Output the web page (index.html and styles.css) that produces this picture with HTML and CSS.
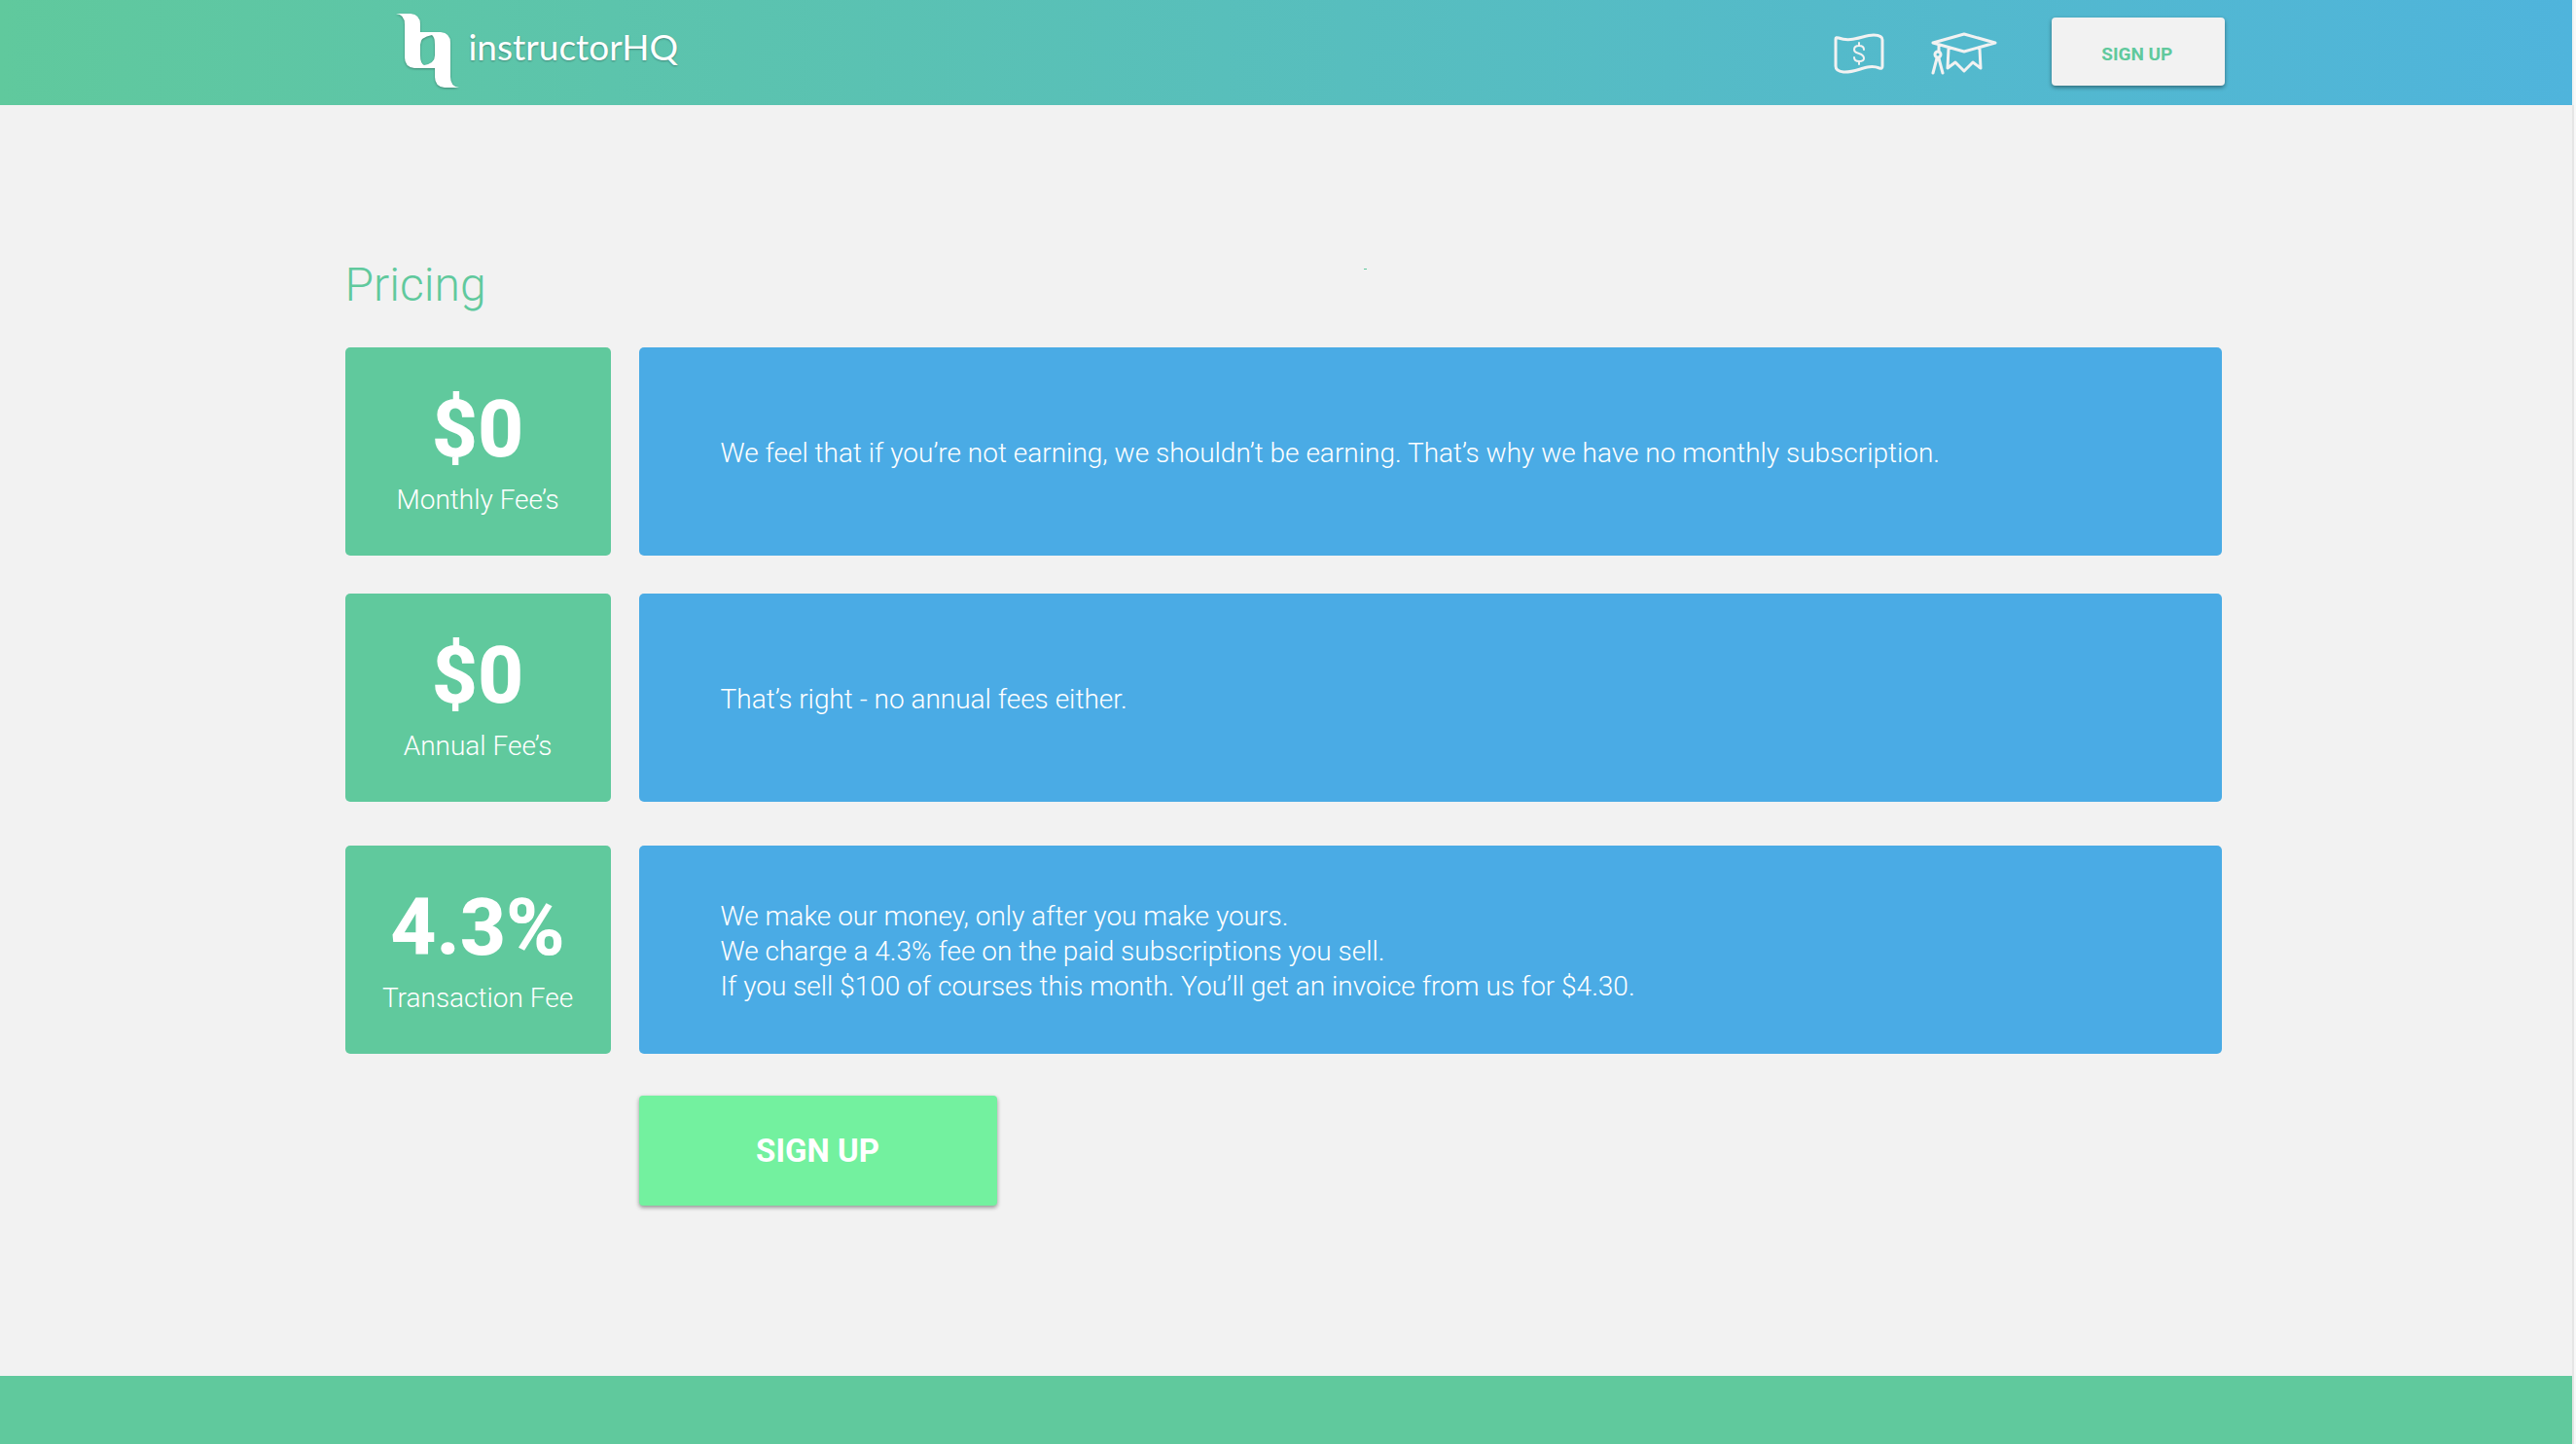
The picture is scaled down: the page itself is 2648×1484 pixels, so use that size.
FILE: index.html
```html
<!DOCTYPE html>
<html lang="en">

<head>
    <meta charset="UTF-8">
    <meta name="viewport" content="width=device-width, initial-scale=1.0">
    <title>Pricing - instructorHQ</title>
    <link rel="stylesheet" href="styles.css">
</head>

<body>

    <header class="header">
        <a class="logo" href="#">
            <svg class="logo-mark" viewBox="0 0 66 80" aria-hidden="true">
                <path fill-rule="evenodd" d="M0 1H15Q25 2 25 12V20H46Q56 21 56 31V66Q56 76 65 77H50Q40 76 40 66V57H19Q9 56 9 46V12Q9 2 0 1ZM37 23Q25 25 25 33V44Q25 52 29 54Q40 52 40 44V33Q40 25 37 23Z"/>
            </svg>
            <span>instructorHQ</span>
        </a>
        <nav class="nav">
            <a class="nav-link" href="#" aria-label="Pricing">
                <svg class="icon-money" viewBox="0 0 52 42" aria-hidden="true">
                    <path d="M2 6Q2 4 5 5C19 10 30 2 41 2Q50 2 50 7V34Q50 37 47 36C34 31 24 41 10 40Q2 39 2 34Z"/>
                    <path class="thin" d="M31 17C31 14 29 13 26 13C23 13 21 14 21 17C21 20 23 20 26 21C29 22 31 23 31 26C31 28 29 29 26 29C23 29 21 28 21 25M26 10V13M26 29V32"/>
                </svg>
            </a>
            <a class="nav-link" href="#" aria-label="Courses">
                <svg class="icon-cap" viewBox="0 0 68 44" aria-hidden="true">
                    <path d="M2 11L34 2L66 11L34 20ZM18 17L17 37L25 31L34 40L43 31L51 37L50 17M8 13V20M6 27L2 42M8 27L12 42"/>
                    <circle cx="7" cy="23" r="3"/>
                </svg>
            </a>
            <button class="btn btn-small" type="button">SIGN UP</button>
        </nav>
    </header>

    <main class="content">
        <div class="heading">
            <h1>Pricing</h1>
            <span class="dot"></span>
        </div>

        <section class="row">
            <div class="fee">
                <strong>$0</strong>
                <span>Monthly Fee’s</span>
            </div>
            <div class="details">
                <p>We feel that if you’re not earning, we shouldn’t be earning. That’s why we have no monthly subscription.</p>
            </div>
        </section>

        <section class="row">
            <div class="fee">
                <strong>$0</strong>
                <span>Annual Fee’s</span>
            </div>
            <div class="details">
                <p>That’s right - no annual fees either.</p>
            </div>
        </section>

        <section class="row row-last">
            <div class="fee">
                <strong>4.3%</strong>
                <span>Transaction Fee</span>
            </div>
            <div class="details">
                <p>We make our money, only after you make yours.<br>
                    We charge a 4.3% fee on the paid subscriptions you sell.<br>
                    If you sell $100 of courses this month. You’ll get an invoice from us for $4.30.</p>
            </div>
        </section>

        <div class="row">
            <button class="btn btn-large" type="button">SIGN UP</button>
        </div>
    </main>

    <footer class="footer"></footer>

</body>

</html>
```

FILE: styles.css
```css
* {
    box-sizing: border-box;
}

body {
    display: flex;
    flex-direction: column;
    min-height: 100vh;
    margin: 0;
    border-right: 2px solid #f8f8f8;
    background-color: #f2f2f2;
    font-family: Roboto, sans-serif;
}

.header {
    display: flex;
    justify-content: space-between;
    height: 108px;
    margin-right: 2px;
    padding: 0 13.5% 0 15.4%;
    background: linear-gradient(to right, #60c99d, #4fb4dc);
}

.logo {
    display: flex;
    align-items: flex-start;
    gap: 8px;
    padding-top: 13px;
    color: white;
    font-family: Lato, sans-serif;
    font-size: 37px;
    line-height: 70px;
    text-decoration: none;
    text-shadow: 0 1px 2px rgba(0, 0, 0, 0.3);
}

.logo-mark {
    width: 66px;
    height: 80px;
    fill: white;
    filter: drop-shadow(0 1px 1px rgba(0, 0, 0, 0.3));
}

.nav {
    display: flex;
    align-items: center;
    padding-bottom: 2px;
}

.nav-link {
    display: flex;
    padding-top: 4px;
    fill: none;
    stroke: #f2f2f2;
    stroke-width: 3;
    stroke-linejoin: round;
    stroke-linecap: round;
}

.icon-money {
    width: 52px;
    height: 42px;
    margin-right: 48px;
}

.icon-money .thin {
    stroke-width: 2;
}

.icon-cap {
    width: 68px;
    height: 44px;
    margin-right: 56px;
}

.btn {
    border: none;
    border-radius: 4px;
    font-family: inherit;
    font-weight: bold;
    box-shadow: 0 2px 4px rgba(0, 0, 0, 0.4);
    cursor: pointer;
}

.btn-small {
    width: 178px;
    height: 70px;
    padding: 4px 6px 0 4px;
    background-color: #f2f2f2;
    color: #60c99d;
    font-size: 19px;
}

.btn-large {
    grid-column: 2;
    width: 368px;
    height: 113px;
    background-color: #73f19f;
    color: white;
    font-size: 33px;
}

.content {
    flex: 1;
    padding: 154px 13.6% 100px 13.4%;
    border-right: 2px solid #e5e5e5;
}

.heading {
    display: grid;
    grid-template-columns: 54.3% 1fr;
    margin-bottom: 33px;
}

h1 {
    margin: 0;
    color: #60c99d;
    font-size: 48px;
    font-weight: 300;
    line-height: 62px;
}

.dot {
    width: 3px;
    height: 1px;
    margin-top: 14px;
    background-color: #60c99d;
}

.row {
    display: grid;
    grid-template-columns: 273px 1fr;
    column-gap: 29px;
    margin-bottom: 39px;
}

.row-last {
    margin: 45px 0 43px;
}

.fee,
.details {
    display: flex;
    flex-direction: column;
    justify-content: center;
    min-height: 214px;
    border-radius: 5px;
    color: white;
    font-size: 28px;
    font-weight: 330;
    line-height: 36px;
}

.fee {
    align-items: center;
    gap: 5px;
    padding-bottom: 5px;
    background-color: #60c99d;
}

.fee strong {
    font-size: 82px;
    font-weight: 800;
    line-height: 100px;
}

.details {
    padding: 4px 84px 0;
    background-color: #4aabe5;
}

.details p {
    margin: 0;
}

.footer {
    height: 70px;
    border-right: 2px solid #e5e5e5;
    background-color: #60c99d;
}
```
